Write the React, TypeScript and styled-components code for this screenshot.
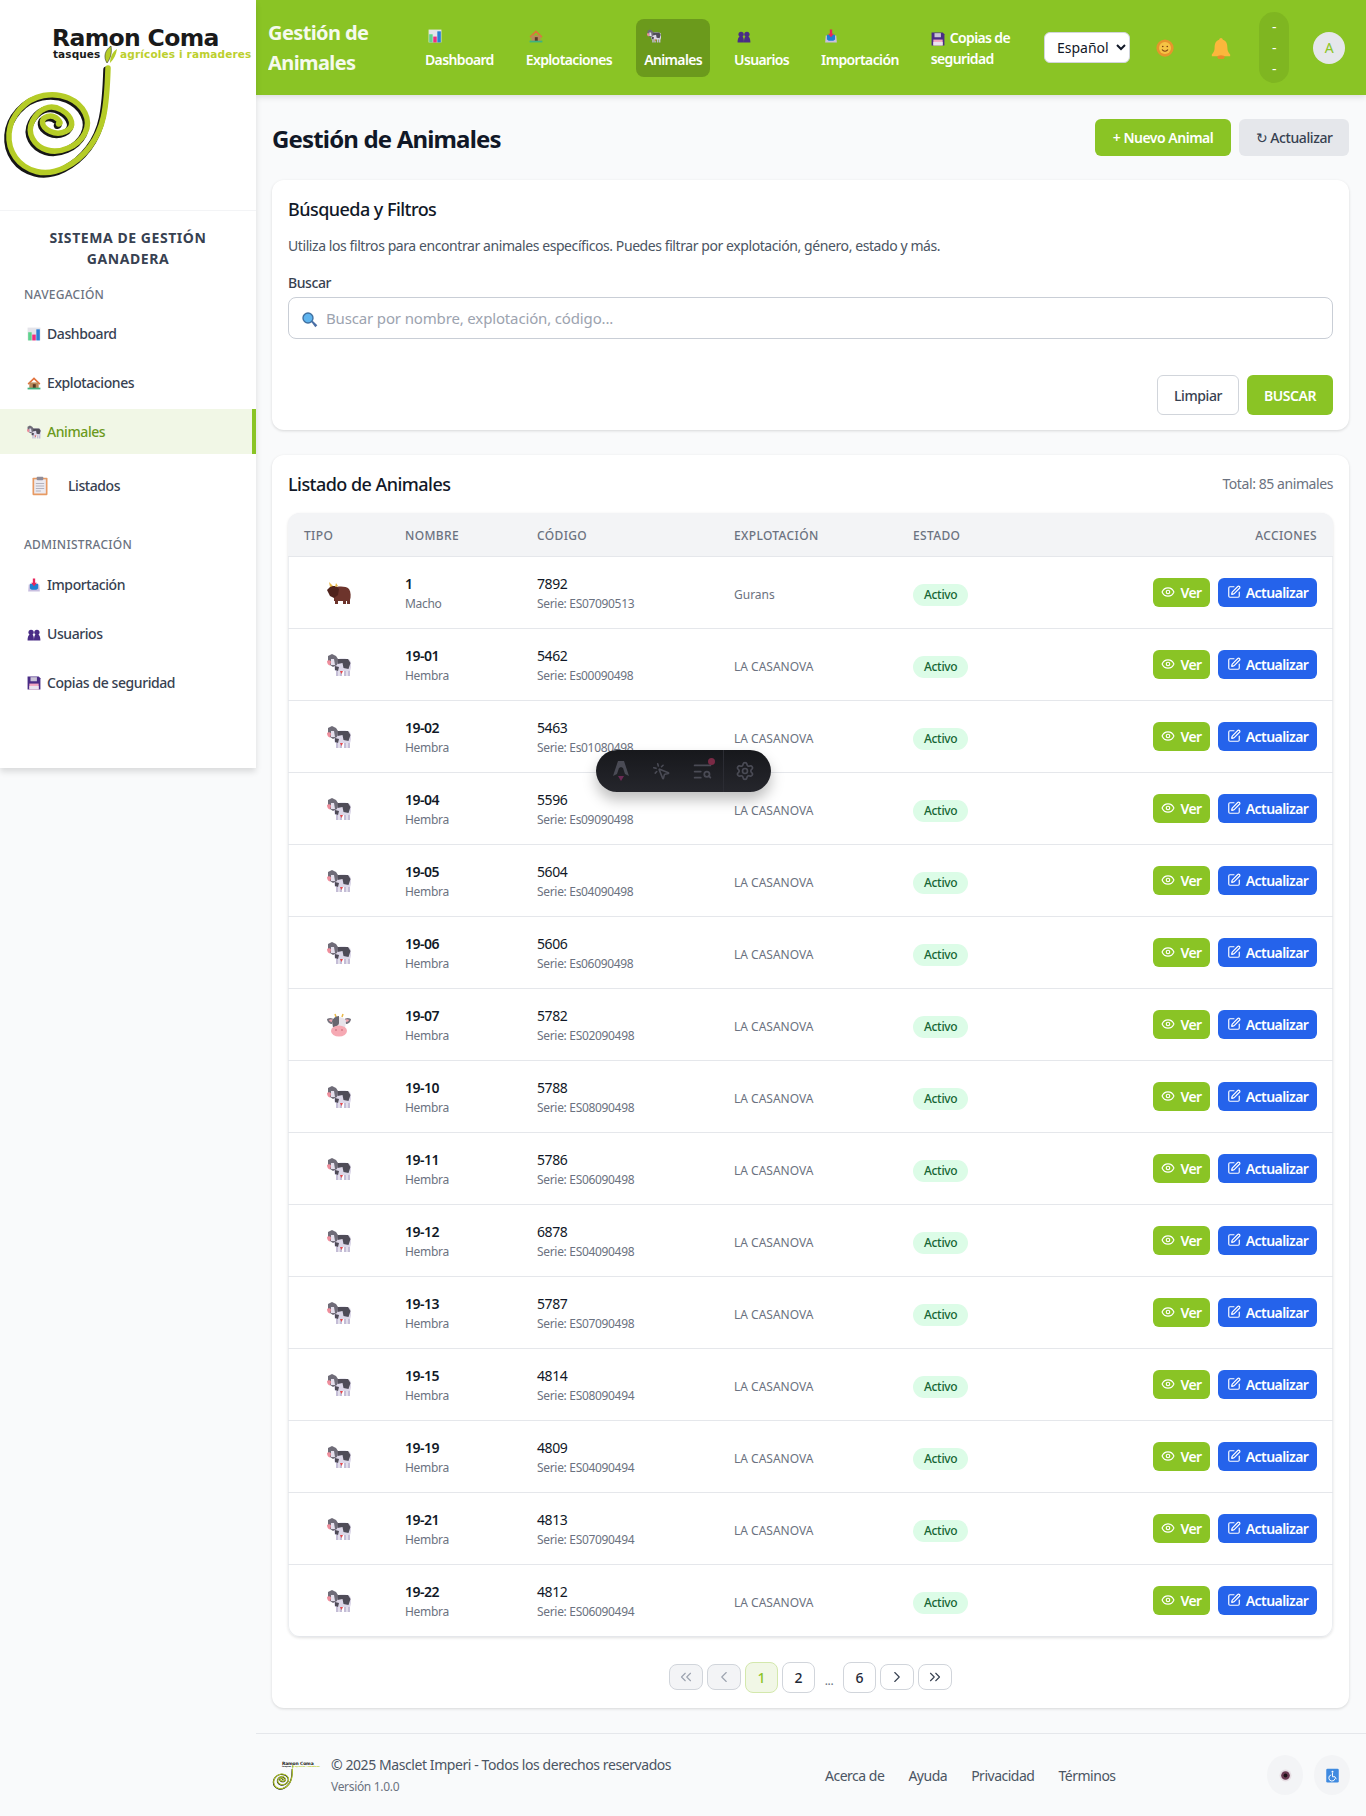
import React from "react";
import styled, { createGlobalStyle } from "styled-components";
import {
  ChevronLeft,
  ChevronRight,
  ChevronsLeft,
  ChevronsRight,
  Eye,
  MousePointerClick,
  Settings,
  SquarePen,
  TextSearch,
} from "lucide-react";

const green = "#8ac425";
const greenDark = "#6b9a1c";

type EmojiName =
  | "chart"
  | "house"
  | "cow"
  | "bull"
  | "cowface"
  | "clipboard"
  | "inbox"
  | "busts"
  | "floppy"
  | "sun"
  | "bell"
  | "lens"
  | "eye"
  | "wheelchair";

// los emojis de la captura son los de Windows, aqui van dibujados a mano
function Emoji({ name, size = 14 }: { name: EmojiName; size?: number }) {
  const art: Record<EmojiName, React.ReactNode> = {
    chart: (
      <>
        <rect x="1" y="1" width="22" height="22" fill="#e4e4ea" />
        <rect x="2" y="9" width="6" height="14" fill="#5fd38d" />
        <rect x="9" y="13" width="6" height="10" fill="#ef2d7f" />
        <rect x="16" y="4" width="6" height="19" fill="#2b7fd6" />
      </>
    ),
    house: (
      <>
        <path d="M12 2 1 13l2 2 9-9 9 9 2-2z" fill="#e2703a" />
        <rect x="4" y="11" width="16" height="10" fill="#b9895a" />
        <rect x="10" y="14" width="5" height="7" fill="#5a3a26" />
        <rect x="1" y="20" width="22" height="3" fill="#3fb27f" />
      </>
    ),
    cow: (
      <>
        <path d="M9 15h2.500v8H9zM12.500 15H15v8h-2.500zM17 15h2.500v8H17zM20.500 15H23v8h-2.500z" fill="#c4bdd6" />
        <path d="M8 7c4-2 12-2 15 0 1.500 3 1.500 8 0 11H8c-1.500-3-1.500-8 0-11z" fill="#dcd7e8" />
        <path d="M10 6h11l2.500 4-2 6-5-1-1-5-5 1z" fill="#4f4c58" />
        <path d="M8 13l4 1-1 4-3-1z" fill="#4f4c58" />
        <path d="M1 3l4-2 4 2 2 3-1 6-4 2-3-2-2-3z" fill="#6f6c78" />
        <path d="M4 6h3l1 6H4z" fill="#e4dfec" />
        <path d="M0 8c1-1 4-1 4 1l-1 3.500c-2 0-3-2.500-3-4.500z" fill="#ef8e9c" />
        <path d="M13 18h3l-1.500 3z" fill="#e5484d" />
      </>
    ),
    bull: (
      <>
        <path d="M7 7c4-2 12-2 15 1 2 3 2 8 1 11v4h-3v-3h-1v3h-3v-3h-5v3H8v-3H7v-3c-1-3-1-7 0-10z" fill="#6d342c" />
        <path d="M0 9l4-4 5 0 3 3-1 6-4 3-4-2z" fill="#4f231d" />
        <path d="M3 6 2 1l4 4zM8 6l1-4 2 3z" fill="#e9b949" />
      </>
    ),
    cowface: (
      <>
        <path d="M0 6c3-2 6-1 7 1l-2 4c-2 0-5-2-5-5zM24 6c-3-2-6-1-7 1l2 4c2 0 5-2 5-5z" fill="#77747e" />
        <path d="M2 7c1-1 3-1 4 0l-1 2c-1 0-3-1-3-2zM22 7c-1-1-3-1-4 0l1 2c1 0 3-1 3-2z" fill="#f2a3ae" />
        <path d="M8 1l1 3M16 1l-1 3" stroke="#e9b949" strokeWidth="1.5" />
        <path d="M5 8c1-5 13-5 14 0l-1 8H6z" fill="#e8e3ea" />
        <path d="M5 8c1-3 4-5 7-5v7c0 2-3 4-6 4z" fill="#69666f" />
        <ellipse cx="12" cy="18" rx="8" ry="5.5" fill="#f6a9b3" />
        <ellipse cx="9" cy="17" rx="1" ry="0.7" fill="#c96b7c" />
        <ellipse cx="15" cy="17" rx="1" ry="0.7" fill="#c96b7c" />
      </>
    ),
    clipboard: (
      <>
        <rect x="3" y="2" width="18" height="21" rx="1" fill="#e79a63" />
        <rect x="5" y="4" width="14" height="17" fill="#eceaf0" />
        <rect x="8" y="1" width="8" height="4" rx="1" fill="#8f8c99" />
        <path d="M7 9h10M7 12h10M7 15h10M7 18h6" stroke="#a8a6b2" strokeWidth="1" />
      </>
    ),
    inbox: (
      <>
        <path d="M3 11h18l1 12H2z" fill="#c9bfe0" />
        <path d="M5 10h14v8l-3 2H8l-3-2z" fill="#1f7fd1" />
        <path d="M10 1h4v7h3l-5 6-5-6h3z" fill="#e8265c" />
      </>
    ),
    busts: (
      <>
        <circle cx="7" cy="9" r="4.500" fill="#4a2c86" />
        <circle cx="17" cy="9" r="4.500" fill="#4a2c86" />
        <path d="M1 23c0-8 3-11 6-11s5 3 5 11zM12 23c0-8 2-11 5-11s6 3 6 11z" fill="#4a2c86" />
      </>
    ),
    floppy: (
      <>
        <path d="M1 1h19l3 3v19H1z" fill="#4a2c86" />
        <rect x="6" y="2" width="11" height="7" fill="#c9c2d6" />
        <rect x="4" y="13" width="16" height="10" fill="#f3a6c0" />
        <rect x="4" y="17" width="16" height="6" fill="#e9e4f0" />
      </>
    ),
    sun: (
      <>
        <circle cx="12" cy="12" r="11.500" fill="#e6952c" />
        <circle cx="12" cy="12" r="8" fill="#f6c344" />
        <path d="M8 14c2 3 6 3 8 0" stroke="#7a3f12" strokeWidth="1.4" fill="none" />
        <circle cx="9" cy="10" r="1.1" fill="#7a3f12" />
        <circle cx="15" cy="10" r="1.1" fill="#7a3f12" />
      </>
    ),
    bell: (
      <>
        <path d="M12 1c1 0 2 1 2 2 4 1 5 5 5 9 0 3 1 5 3 7v2H2v-2c2-2 3-4 3-7 0-4 1-8 5-9 0-1 1-2 2-2z" fill="#fbb73c" />
        <ellipse cx="12" cy="22" rx="4" ry="2" fill="#e98a2a" />
      </>
    ),
    lens: (
      <>
        <path d="M14 15l2-2 7 7-3 3z" fill="#4a6fa5" />
        <circle cx="9" cy="9" r="8.500" fill="#3f6f9f" />
        <circle cx="9" cy="9" r="6.500" fill="#5fb4ee" />
      </>
    ),
    eye: (
      <>
        <circle cx="12" cy="12" r="11" fill="#e6dde3" />
        <circle cx="12" cy="12" r="8" fill="#6b3a52" />
        <circle cx="12" cy="12" r="3.500" fill="#1c1016" />
      </>
    ),
    wheelchair: (
      <>
        <rect x="2" y="1" width="20" height="22" rx="2" fill="#3f8ae0" />
        <circle cx="12" cy="6" r="1.6" fill="#fff" />
        <path d="M12 8v6h4l2 4M10 11a5 5 0 1 0 6 6" stroke="#fff" strokeWidth="1.5" fill="none" />
      </>
    ),
  };
  return (
    <EmojiSvg viewBox="0 0 24 24" width={size} height={size}>
      {art[name]}
    </EmojiSvg>
  );
}

const spiral: [number, number][] = [
  [108, 68], [107, 100], [100, 133], [80, 160], [50, 175], [23, 168], [8, 147], [10, 120], [30, 98],
  [57, 93], [80, 103], [90, 123], [80, 143], [57, 153], [37, 147], [28, 130], [37, 112], [53, 105],
  [70, 115], [73, 128], [58, 135], [43, 128], [42, 118], [53, 115], [62, 123], [55, 125],
];

function spiralPath() {
  let d = `M${spiral[0][0]} ${spiral[0][1]}`;
  for (let i = 1; i < spiral.length - 1; i++) {
    const [x, y] = spiral[i];
    const [nx, ny] = spiral[i + 1];
    d += ` Q${x} ${y} ${(x + nx) / 2} ${(y + ny) / 2}`;
  }
  return d;
}

function Logo({ scale = 1 }: { scale?: number }) {
  const d = spiralPath();
  return (
    <LogoSvg viewBox="0 0 256 190" width={256 * scale} height={190 * scale}>
      <text x="52" y="46" fontFamily="DejaVu Sans" fontWeight="700" fontSize="23.5" fill="#1a1a1a" textLength="167">
        Ramon Coma
      </text>
      <text x="53" y="58" fontFamily="DejaVu Sans" fontWeight="700" fontSize="10.5" fill="#1a1a1a" textLength="47">
        tasques
      </text>
      <text x="120" y="58" fontFamily="DejaVu Sans" fontWeight="700" fontSize="10.5" fill="#bccf2e" textLength="131">
        agrícoles i ramaderes
      </text>
      <path d="M107 63c-4-6-2-13 4-17 1 6 0 12-4 17z" fill="#b5cc27" stroke="#161616" strokeWidth="0.5" />
      <path d="M110 63c0-5 2-11 7-14-1 6-3 10-7 14z" fill="#b5cc27" />
      <path d={d} transform="translate(-1.5 1.8)" fill="none" stroke="#161616" strokeWidth="6.5" strokeLinecap="round" />
      <path d={d} fill="none" stroke="#b5cc27" strokeWidth="5.5" strokeLinecap="round" />
    </LogoSvg>
  );
}

const topNav: { icon: EmojiName; label: string }[] = [
  { icon: "chart", label: "Dashboard" },
  { icon: "house", label: "Explotaciones" },
  { icon: "cow", label: "Animales" },
  { icon: "busts", label: "Usuarios" },
  { icon: "inbox", label: "Importación" },
];

const rows: [string, string, string, string][] = [
  ["19-01", "5462", "Es00090498", "cow"],
  ["19-02", "5463", "Es01080498", "cow"],
  ["19-04", "5596", "Es09090498", "cow"],
  ["19-05", "5604", "Es04090498", "cow"],
  ["19-06", "5606", "Es06090498", "cow"],
  ["19-07", "5782", "ES02090498", "cowface"],
  ["19-10", "5788", "ES08090498", "cow"],
  ["19-11", "5786", "ES06090498", "cow"],
  ["19-12", "6878", "ES04090498", "cow"],
  ["19-13", "5787", "ES07090498", "cow"],
  ["19-15", "4814", "ES08090494", "cow"],
  ["19-19", "4809", "ES04090494", "cow"],
  ["19-21", "4813", "ES07090494", "cow"],
  ["19-22", "4812", "ES06090494", "cow"],
];

function AnimalRow(props: { icon: EmojiName; name: string; gender: string; code: string; serie: string; farm: string }) {
  return (
    <tr>
      <IconCell>
        <Emoji name={props.icon} size={24} />
      </IconCell>
      <TextCell>
        <Strong>{props.name}</Strong>
        <Sub>{props.gender}</Sub>
      </TextCell>
      <TextCell>
        <Code>{props.code}</Code>
        <Sub>Serie: {props.serie}</Sub>
      </TextCell>
      <LowCell>
        <Farm>{props.farm}</Farm>
      </LowCell>
      <LowCell>
        <Badge>Activo</Badge>
      </LowCell>
      <Cell>
        <Actions>
          <RowButton $blue={false}>
            <Eye size={14} strokeWidth={2} />
            Ver
          </RowButton>
          <RowButton $blue>
            <SquarePen size={14} strokeWidth={2} />
            Actualizar
          </RowButton>
        </Actions>
      </Cell>
    </tr>
  );
}

export default function App() {
  return (
    <>
      <GlobalStyle />
      <Layout>
        <Sidebar>
          <LogoBox>
            <Logo />
          </LogoBox>
          <SystemName>
            SISTEMA DE GESTIÓN
            <br />
            GANADERA
          </SystemName>
          <SectionLabel>NAVEGACIÓN</SectionLabel>
          <SideItem>
            <Emoji name="chart" />
            Dashboard
          </SideItem>
          <SideItem>
            <Emoji name="house" />
            Explotaciones
          </SideItem>
          <SideItem $active>
            <Emoji name="cow" />
            Animales
          </SideItem>
          <ListItem>
            <Emoji name="clipboard" size={20} />
            Listados
          </ListItem>
          <SectionLabel $admin>ADMINISTRACIÓN</SectionLabel>
          <SideItem>
            <Emoji name="inbox" />
            Importación
          </SideItem>
          <SideItem>
            <Emoji name="busts" />
            Usuarios
          </SideItem>
          <SideItem>
            <Emoji name="floppy" />
            Copias de seguridad
          </SideItem>
        </Sidebar>

        <Main>
          <Header>
            <HeaderTitle>Gestión de Animales</HeaderTitle>
            <TopNav>
              {topNav.map((item) => (
                <TopItem key={item.label} $active={item.label === "Animales"}>
                  <Emoji name={item.icon} />
                  {item.label}
                </TopItem>
              ))}
              <TopItemWrap>
                <Emoji name="floppy" /> Copias de seguridad
              </TopItemWrap>
            </TopNav>
            <LangSelect defaultValue="es">
              <option value="es">Español</option>
            </LangSelect>
            <SunBox>
              <Emoji name="sun" size={18} />
            </SunBox>
            <BellBox>
              <Emoji name="bell" size={22} />
            </BellBox>
            <UserPill>
              <span>-</span>
              <span>-</span>
              <span>-</span>
            </UserPill>
            <Avatar>A</Avatar>
          </Header>

          <Content>
            <PageHead>
              <PageTitle>Gestión de Animales</PageTitle>
              <PageActions>
                <PrimaryButton>+ Nuevo Animal</PrimaryButton>
                <GreyButton>↻ Actualizar</GreyButton>
              </PageActions>
            </PageHead>

            <FilterCard>
              <CardTitle>Búsqueda y Filtros</CardTitle>
              <Description>
                Utiliza los filtros para encontrar animales específicos. Puedes filtrar por explotación, género, estado y más.
              </Description>
              <FieldLabel>Buscar</FieldLabel>
              <SearchBox>
                <SearchIcon>
                  <Emoji name="lens" size={16} />
                </SearchIcon>
                <SearchInput placeholder="Buscar por nombre, explotación, código..." />
              </SearchBox>
              <FilterActions>
                <ClearButton>Limpiar</ClearButton>
                <SearchButton>BUSCAR</SearchButton>
              </FilterActions>
            </FilterCard>

            <ListCard>
              <ListHead>
                <CardTitle>Listado de Animales</CardTitle>
                <Total>Total: 85 animales</Total>
              </ListHead>
              <TableWrap>
                <Table>
                  <colgroup>
                    <col width="101" />
                    <col width="132" />
                    <col width="197" />
                    <col width="179" />
                    <col />
                  </colgroup>
                  <thead>
                    <tr>
                      <Th>TIPO</Th>
                      <Th>NOMBRE</Th>
                      <Th>CÓDIGO</Th>
                      <Th>EXPLOTACIÓN</Th>
                      <Th>ESTADO</Th>
                      <Th $right>ACCIONES</Th>
                    </tr>
                  </thead>
                  <tbody>
                    <AnimalRow icon="bull" name="1" gender="Macho" code="7892" serie="ES07090513" farm="Gurans" />
                    {rows.map(([name, code, serie, icon]) => (
                      <AnimalRow
                        key={name}
                        icon={icon as EmojiName}
                        name={name}
                        gender="Hembra"
                        code={code}
                        serie={serie}
                        farm="LA CASANOVA"
                      />
                    ))}
                  </tbody>
                </Table>
              </TableWrap>
              <Pager>
                <PageButton $disabled>
                  <ChevronsLeft size={18} strokeWidth={1.5} />
                </PageButton>
                <PageButton $disabled>
                  <ChevronLeft size={18} strokeWidth={1.5} />
                </PageButton>
                <PageNumber $current>1</PageNumber>
                <PageNumber>2</PageNumber>
                <Dots>...</Dots>
                <PageNumber>6</PageNumber>
                <PageButton>
                  <ChevronRight size={18} strokeWidth={1.5} />
                </PageButton>
                <PageButton>
                  <ChevronsRight size={18} strokeWidth={1.5} />
                </PageButton>
              </Pager>
            </ListCard>
          </Content>

          <Footer>
            <FooterBrand>
              <FooterLogo>
                <Logo scale={0.19} />
              </FooterLogo>
              <div>
                <Copyright>© 2025 Masclet Imperi - Todos los derechos reservados</Copyright>
                <Version>Versión 1.0.0</Version>
              </div>
            </FooterBrand>
            <FooterLinks>
              <FooterLink>Acerca de</FooterLink>
              <FooterLink>Ayuda</FooterLink>
              <FooterLink>Privacidad</FooterLink>
              <FooterLink>Términos</FooterLink>
            </FooterLinks>
            <FooterTools>
              <RoundTool>
                <Emoji name="eye" size={13} />
              </RoundTool>
              <RoundTool>
                <Emoji name="wheelchair" size={15} />
              </RoundTool>
            </FooterTools>
          </Footer>
        </Main>
      </Layout>

      <DevToolbar>
        <DevSlot>
          <svg width="18" height="22" viewBox="0 0 18 22">
            <path d="M6 1h6l5 15-4-2-2-6-2-1-2 1-2 6-4 2z" fill="#4a4b55" />
            <path d="M6 16h6l-3 5z" fill="#6b2a55" />
          </svg>
        </DevSlot>
        <DevSlot>
          <MousePointerClick size={19} color="#4a4b55" />
        </DevSlot>
        <DevSlot>
          <TextSearch size={21} color="#4a4b55" />
          <DevDot />
        </DevSlot>
        <DevDivider />
        <DevSlot>
          <Settings size={20} color="#4a4b55" />
        </DevSlot>
      </DevToolbar>
    </>
  );
}

const GlobalStyle = createGlobalStyle`
  * { box-sizing: border-box; }
  html, body { margin: 0; padding: 0; background: #f9fafb; }
  body {
    font-family: "Noto Sans", "Open Sans", sans-serif;
    letter-spacing: -0.02em;
    color: #111827;
  }
`;

const EmojiSvg = styled.svg`
  display: inline-block;
  flex: none;
  vertical-align: middle;
`;

const LogoSvg = styled.svg`
  display: block;
`;

const Layout = styled.div`
  display: grid;
  grid-template-columns: 256px 1110px;
  min-height: 1816px;
`;

const Sidebar = styled.aside`
  height: 768px;
  background: #fff;
  box-shadow: 0 4px 6px rgba(0, 0, 0, 0.12);
  position: relative;
  z-index: 2;
`;

const LogoBox = styled.div`
  height: 211px;
  border-bottom: 1px solid #f3f4f6;
`;

const SystemName = styled.div`
  padding-top: 16px;
  text-align: center;
  font-size: 14px;
  font-weight: 700;
  line-height: 21px;
  letter-spacing: 0.04em;
  color: #374151;
`;

const SectionLabel = styled.div<{ $admin?: boolean }>`
  padding: 0 24px;
  margin-top: ${(p) => (p.$admin ? "24px" : "18px")};
  margin-bottom: ${(p) => (p.$admin ? "9px" : "8px")};
  font-size: 12px;
  line-height: 16px;
  letter-spacing: 0.02em;
  font-weight: 500;
  color: #6b7280;
`;

const SideItem = styled.div<{ $active?: boolean }>`
  display: flex;
  align-items: center;
  gap: 6px;
  height: 45px;
  margin-bottom: 4px;
  padding-left: 27px;
  font-size: 14px;
  font-weight: 500;
  letter-spacing: -0.03em;
  color: ${(p) => (p.$active ? greenDark : "#374151")};
  background: ${(p) => (p.$active ? "#f1f7e6" : "transparent")};
  border-right: ${(p) => (p.$active ? `4px solid ${green}` : "none")};
`;

const ListItem = styled.div`
  display: flex;
  align-items: center;
  gap: 18px;
  height: 55px;
  padding-left: 30px;
  font-size: 14px;
  font-weight: 500;
  letter-spacing: -0.03em;
  color: #374151;
`;

const Main = styled.main`
  display: flex;
  flex-direction: column;
  min-width: 0;
`;

const Header = styled.header`
  display: flex;
  align-items: center;
  height: 95px;
  padding: 0 20px 0 12px;
  background: ${green};
  box-shadow: 0 2px 6px rgba(0, 0, 0, 0.12);
`;

const HeaderTitle = styled.div`
  width: 149px;
  padding-right: 30px;
  flex: none;
  font-size: 20px;
  font-weight: 700;
  line-height: 30px;
  letter-spacing: -0.03em;
  color: #fff;
  opacity: 0.92;
`;

const TopNav = styled.nav`
  display: flex;
  align-items: center;
  gap: 16px;
  flex: none;
  width: 627px;
`;

const TopItem = styled.a<{ $active?: boolean }>`
  display: flex;
  flex-direction: column;
  align-items: flex-start;
  justify-content: center;
  gap: 7px;
  height: 58px;
  padding: 2px 8px 0;
  border-radius: 8px;
  font-size: 14px;
  font-weight: 600;
  letter-spacing: -0.045em;
  color: #fff;
  background: ${(p) => (p.$active ? greenDark : "transparent")};
  svg {
    margin-left: 3px;
  }
`;

const TopItemWrap = styled.a`
  width: 92px;
  margin-left: 8px;
  flex: none;
  font-size: 14px;
  font-weight: 600;
  line-height: 21px;
  letter-spacing: -0.045em;
  color: #fff;
  svg {
    margin-right: 2px;
  }
`;

const LangSelect = styled.select`
  width: 86px;
  height: 31px;
  flex: none;
  border: 1px solid #d1d5db;
  border-radius: 6px;
  background: #fff;
  font: inherit;
  font-size: 14px;
  color: #111827;
  padding-left: 8px;
`;

const SunBox = styled.div`
  display: flex;
  justify-content: center;
  width: 49px;
  flex: none;
  margin-left: 10px;
`;

const BellBox = styled(SunBox)`
  margin-left: 7px;
`;

const UserPill = styled.div`
  display: flex;
  flex-direction: column;
  align-items: center;
  justify-content: center;
  width: 30px;
  height: 71px;
  margin-left: 14px;
  flex: none;
  border-radius: 15px;
  background: #7fb621;
  font-size: 14px;
  line-height: 21px;
  color: #fff;
`;

const Avatar = styled.div`
  display: flex;
  align-items: center;
  justify-content: center;
  width: 32px;
  height: 32px;
  margin-left: 24px;
  flex: none;
  border-radius: 50%;
  background: #e5e7eb;
  font-size: 14px;
  color: ${green};
`;

const Content = styled.div`
  padding: 24px 17px 24px 16px;
  flex: 1;
`;

const PageHead = styled.div`
  display: flex;
  justify-content: space-between;
  align-items: center;
  height: 37px;
  margin-bottom: 24px;
`;

const PageTitle = styled.h1`
  margin: 1px 0 0;
  font-size: 24px;
  font-weight: 700;
  letter-spacing: -0.035em;
  color: #111827;
`;

const PageActions = styled.div`
  display: flex;
  gap: 8px;
`;

const PrimaryButton = styled.button`
  width: 136px;
  height: 37px;
  border: 0;
  border-radius: 6px;
  background: ${green};
  color: #fff;
  font: inherit;
  font-size: 14px;
  font-weight: 600;
  letter-spacing: -0.035em;
`;

const GreyButton = styled.button`
  width: 110px;
  height: 37px;
  border: 0;
  border-radius: 6px;
  background: #e5e7eb;
  color: #374151;
  font: inherit;
  font-size: 14px;
  font-weight: 500;
  letter-spacing: -0.03em;
`;

const Card = styled.section`
  background: #fff;
  border-radius: 12px;
  box-shadow: 0 1px 3px rgba(0, 0, 0, 0.14);
  padding: 16px;
`;

const FilterCard = styled(Card)`
  height: 250px;
  margin-bottom: 25px;
`;

const CardTitle = styled.h3`
  margin: -1px 0 0;
  font-size: 18px;
  line-height: 28px;
  font-weight: 500;
  letter-spacing: -0.03em;
  color: #111827;
`;

const Description = styled.p`
  margin: 13px 0 0;
  font-size: 14px;
  line-height: 20px;
  letter-spacing: -0.03em;
  color: #4b5563;
`;

const FieldLabel = styled.div`
  margin-top: 17px;
  font-size: 14px;
  line-height: 20px;
  font-weight: 500;
  letter-spacing: -0.03em;
  color: #374151;
`;

const SearchBox = styled.div`
  position: relative;
  margin-top: 4px;
`;

const SearchIcon = styled.span`
  position: absolute;
  left: 14px;
  top: 10px;
`;

const SearchInput = styled.input`
  display: block;
  width: 100%;
  height: 42px;
  padding: 0 12px 0 37px;
  border: 1px solid #c9ced6;
  border-radius: 8px;
  font: inherit;
  font-size: 15px;
  letter-spacing: -0.01em;
  &::placeholder {
    color: #9ca3af;
  }
`;

const FilterActions = styled.div`
  display: flex;
  justify-content: flex-end;
  gap: 8px;
  margin-top: 36px;
`;

const ClearButton = styled.button`
  width: 82px;
  height: 40px;
  border: 1px solid #d1d5db;
  border-radius: 6px;
  background: #fff;
  color: #374151;
  font: inherit;
  font-size: 14px;
  font-weight: 500;
  letter-spacing: -0.03em;
`;

const SearchButton = styled.button`
  width: 86px;
  height: 40px;
  border: 0;
  border-radius: 6px;
  background: ${green};
  color: #fff;
  font: inherit;
  font-size: 14px;
  font-weight: 600;
  letter-spacing: -0.03em;
`;

const ListCard = styled(Card)`
  height: 1253px;
`;

const ListHead = styled.div`
  display: flex;
  justify-content: space-between;
  align-items: flex-start;
  height: 42px;
`;

const Total = styled.span`
  font-size: 14px;
  line-height: 28px;
  margin-top: -1px;
  letter-spacing: -0.03em;
  color: #6b7280;
`;

const TableWrap = styled.div`
  border-radius: 12px;
  overflow: hidden;
  box-shadow: 0 1px 3px rgba(0, 0, 0, 0.12), 0 0 0 1px #eceef1 inset;
`;

const Table = styled.table`
  width: 100%;
  table-layout: fixed;
  border-collapse: collapse;
`;

const Th = styled.th<{ $right?: boolean }>`
  height: 43px;
  padding: 2px 16px 0;
  background: #f3f4f6;
  border-bottom: 1px solid #e5e7eb;
  text-align: ${(p) => (p.$right ? "right" : "left")};
  font-size: 12px;
  font-weight: 500;
  letter-spacing: 0.03em;
  color: #6b7280;
`;

const Cell = styled.td`
  height: 72px;
  padding: 0 16px;
  border-bottom: 1px solid #e5e7eb;
  vertical-align: middle;
`;

const TextCell = styled(Cell)`
  padding-top: 2px;
`;

const LowCell = styled(Cell)`
  padding-top: 4px;
`;

const IconCell = styled(Cell)`
  padding: 1px 0 0 39px;
`;

const Strong = styled.div`
  font-size: 14px;
  line-height: 20px;
  font-weight: 600;
  letter-spacing: -0.035em;
  color: #111827;
`;

const Code = styled.div`
  font-size: 14px;
  line-height: 20px;
  letter-spacing: -0.03em;
  color: #111827;
`;

const Sub = styled.div`
  font-size: 12px;
  line-height: 16px;
  margin-top: 2px;
  color: #6b7280;
`;

const Farm = styled.div`
  font-size: 12px;
  letter-spacing: 0;
  color: #6b7280;
`;

const Badge = styled.span`
  display: inline-flex;
  align-items: center;
  height: 22px;
  padding: 0 11px;
  border-radius: 11px;
  background: #dcfce7;
  font-size: 12px;
  font-weight: 500;
  color: #166534;
`;

const Actions = styled.div`
  display: flex;
  justify-content: flex-end;
  gap: 8px;
`;

const RowButton = styled.button<{ $blue: boolean }>`
  display: inline-flex;
  align-items: center;
  justify-content: center;
  gap: 5px;
  width: ${(p) => (p.$blue ? "99px" : "57px")};
  height: 29px;
  padding: 0;
  border: 0;
  border-radius: 6px;
  background: ${(p) => (p.$blue ? "#2563eb" : green)};
  color: #fff;
  font: inherit;
  font-size: 14px;
  font-weight: 600;
  letter-spacing: -0.04em;
`;

const Pager = styled.div`
  display: flex;
  justify-content: center;
  align-items: center;
  gap: 4px;
  margin-top: 25px;
`;

const PageButton = styled.button<{ $disabled?: boolean }>`
  display: flex;
  align-items: center;
  justify-content: center;
  width: 34px;
  height: 26px;
  padding: 0;
  border: 1px solid #d1d5db;
  border-radius: 8px;
  background: ${(p) => (p.$disabled ? "#f3f4f6" : "#fff")};
  color: ${(p) => (p.$disabled ? "#9ca3af" : "#374151")};
`;

const PageNumber = styled.button<{ $current?: boolean }>`
  width: 33px;
  height: 31px;
  padding: 0;
  border: 1px solid ${(p) => (p.$current ? "#d3e8ac" : "#d1d5db")};
  border-radius: 8px;
  background: ${(p) => (p.$current ? "#f1f7e6" : "#fff")};
  color: ${(p) => (p.$current ? green : "#1f2937")};
  font: inherit;
  font-size: 14px;
  font-weight: 500;
`;

const Dots = styled.span`
  width: 20px;
  text-align: center;
  font-size: 12px;
  padding-top: 6px;
  color: #6b7280;
`;

const Footer = styled.footer`
  display: flex;
  align-items: center;
  height: 83px;
  padding: 0 16px;
  border-top: 1px solid #e5e7eb;
`;

const FooterBrand = styled.div`
  display: flex;
  align-items: center;
  gap: 8px;
  width: 553px;
  flex: none;
`;

const FooterLogo = styled.div`
  width: 51px;
  height: 38px;
  flex: none;
`;

const Copyright = styled.div`
  font-size: 14px;
  line-height: 20px;
  letter-spacing: -0.03em;
  color: #4b5563;
`;

const Version = styled.div`
  margin-top: 4px;
  font-size: 12px;
  line-height: 16px;
  color: #6b7280;
`;

const FooterLinks = styled.div`
  display: flex;
  gap: 24px;
`;

const FooterLink = styled.a`
  font-size: 14px;
  letter-spacing: -0.035em;
  color: #4b5563;
`;

const FooterTools = styled.div`
  display: flex;
  gap: 11px;
  margin-left: auto;
`;

const RoundTool = styled.div`
  display: flex;
  align-items: center;
  justify-content: center;
  width: 36px;
  height: 40px;
  border-radius: 50%;
  background: #f3f4f6;
`;

const DevToolbar = styled.div`
  position: absolute;
  left: 596px;
  top: 750px;
  z-index: 5;
  display: flex;
  align-items: center;
  width: 175px;
  height: 42px;
  padding: 0 4px;
  border-radius: 21px;
  background: linear-gradient(180deg, #17181c, #25262c);
  box-shadow: 0 8px 14px rgba(0, 0, 0, 0.25);
`;

const DevSlot = styled.div`
  position: relative;
  display: flex;
  align-items: center;
  justify-content: center;
  width: 41px;
  height: 42px;
`;

const DevDivider = styled.div`
  width: 1px;
  height: 42px;
  background: #2b2c33;
`;

const DevDot = styled.span`
  position: absolute;
  right: 8px;
  top: 8px;
  width: 7px;
  height: 7px;
  border-radius: 50%;
  background: #7a2a45;
`;
